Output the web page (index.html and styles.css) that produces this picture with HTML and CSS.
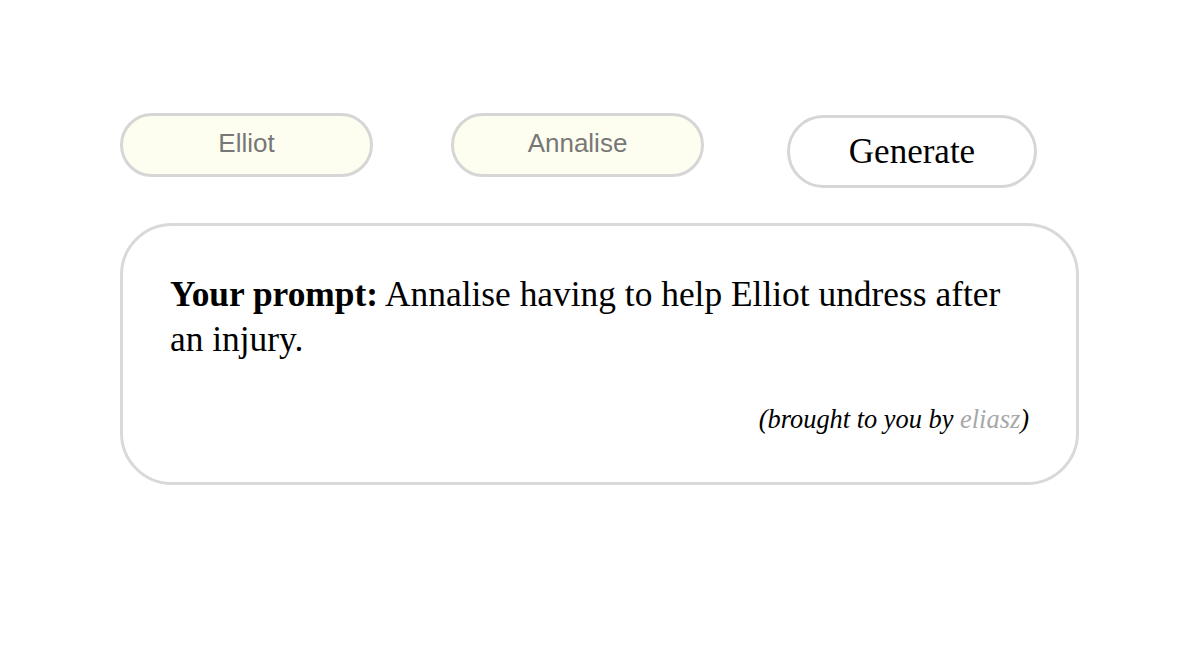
FILE: index.html
```html
<!DOCTYPE html>
<html>
<head>
<meta charset="utf-8">
<link rel="stylesheet" href="styles.css">
</head>
<body>
<main class="page">
  <div class="controls">
    <input class="name" type="text" value="Elliot">
    <input class="name" type="text" value="Annalise">
    <button class="generate">Generate</button>
  </div>
  <section class="card">
    <p class="prompt"><strong>Your prompt:</strong> Annalise having to help Elliot undress after an injury.</p>
    <p class="credit">(brought to you by <span class="author">eliasz</span>)</p>
  </section>
</main>
</body>
</html>
```
FILE: styles.css
```css
html, body {
  margin: 0;
  padding: 0;
  background: #ffffff;
}
.page {
  padding: 113px 0 0 120px;
  font-family: "Liberation Serif", "Times New Roman", serif;
}
.controls {
  display: flex;
  align-items: flex-start;
}
.name {
  box-sizing: border-box;
  width: 253px;
  height: 64px;
  margin: 0 78px 0 0;
  padding: 0 0 4px 0;
  border: 3px solid #d6d6d6;
  border-radius: 32px;
  background: #fefef0;
  color: #777777;
  font-family: "Liberation Sans", Arial, sans-serif;
  font-size: 26px;
  text-align: center;
  outline: none;
}
.generate {
  box-sizing: border-box;
  width: 250px;
  height: 73px;
  margin: 2px 0 0 5px;
  padding: 0;
  border: 3px solid #d6d6d6;
  border-radius: 37px;
  background: #ffffff;
  color: #000;
  font-family: "Liberation Serif", "Times New Roman", serif;
  font-size: 35px;
  cursor: pointer;
}
.card {
  box-sizing: border-box;
  width: 959px;
  margin-top: 35px;
  padding: 46px 47px 46px 47px;
  border: 3px solid #d9d9d9;
  border-radius: 52px;
}
.prompt {
  margin: 0;
  font-size: 35.4px;
  line-height: 45px;
  color: #000;
}
.prompt strong {
  font-weight: bold;
}
.credit {
  margin: 40px 0 0 0;
  text-align: right;
  font-style: italic;
  font-size: 26.4px;
  line-height: 34px;
  color: #000;
}
.author {
  color: #a8a8a8;
}
```
